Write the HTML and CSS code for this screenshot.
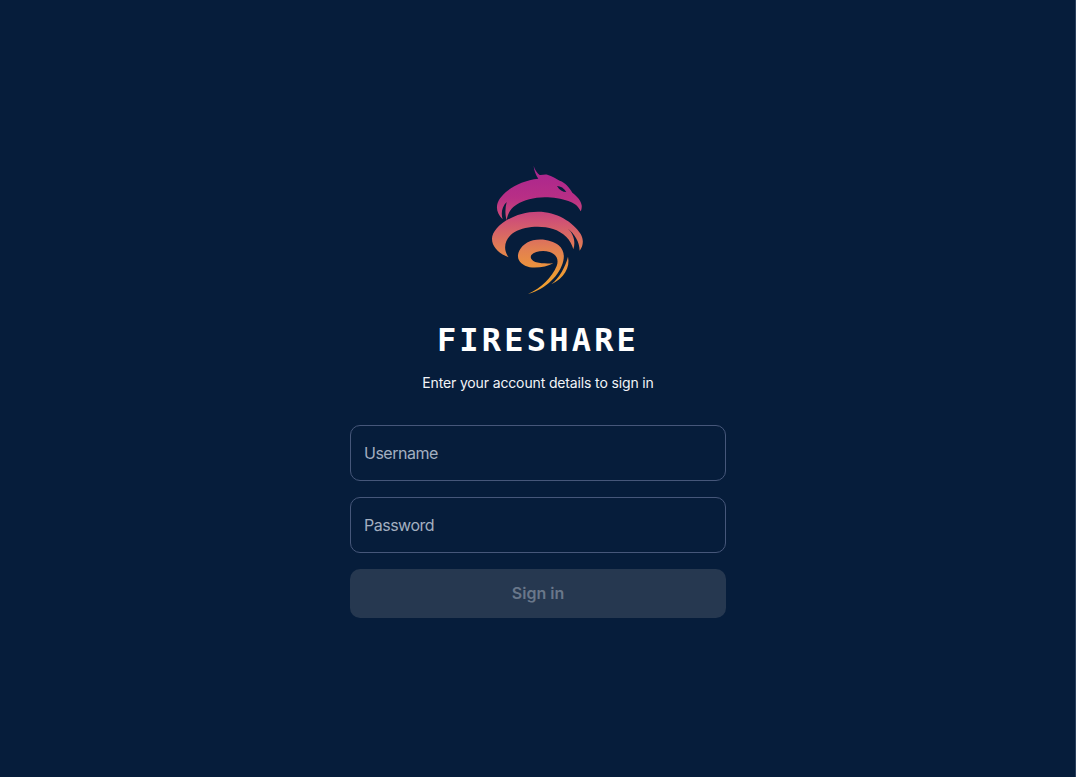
FILE: index.html
```html
<!DOCTYPE html>
<html lang="en">
<head>
<meta charset="utf-8">
<title>Fireshare</title>
<link rel="stylesheet" href="styles.css">
</head>
<body>
<main class="page">
  <svg class="logo" viewBox="0 0 360 420" width="120" height="140" aria-label="Fireshare logo">
    <defs>
      <linearGradient id="fire" gradientUnits="userSpaceOnUse" x1="0" y1="20" x2="0" y2="400">
        <stop offset="0" stop-color="#a92590"/>
        <stop offset="0.25" stop-color="#b82f85"/>
        <stop offset="0.42" stop-color="#cf5076"/>
        <stop offset="0.65" stop-color="#e27f52"/>
        <stop offset="0.85" stop-color="#ee9a35"/>
        <stop offset="1" stop-color="#f2a02c"/>
      </linearGradient>
    </defs>
    <path fill="url(#fire)" fill-rule="evenodd" d="M167 18C170 30 178 40 185 45C192 46 200 42 208 44C222 47 235 57 245 62C262 68 274 82 283 98C296 108 310 122 311 136C312 142 310 150 308 154C300 136 286 128 271 123C245 113 205 109 176 113C145 117 118 130 106 141C94 152 88 166 86 181C81 165 81 145 86 126C72 140 68 160 74 178C60 165 54 148 58 132C66 100 120 62 181 56C174 46 168 32 167 18ZM237 78C244 90 254 96 265 96C258 84 248 78 237 78Z"/>
    <path fill="url(#fire)" d="M92 292C62 280 42 260 42 236C42 205 100 155 180 155C235 155 285 185 308 222C318 240 316 258 305 272C304 245 290 222 268 205C286 220 294 245 286 268C280 240 255 216 225 207C190 195 140 199 110 216C85 231 70 262 92 292Z"/>
    <path fill="url(#fire)" d="M150 402C190 384 222 352 236 318C243 298 236 284 215 276C195 270 170 274 160 285C154 296 165 304 175 307C190 311 208 311 226 310C208 320 180 325 155 322C135 317 118 305 120 285C122 268 140 246 165 241C195 234 225 243 242 256C256 268 260 285 256 302C246 345 205 386 150 402Z"/>
    <path fill="url(#fire)" d="M220 373C244 352 262 322 270 290C277 322 258 354 220 373Z"/>
  </svg>
  <h1 class="brand">FIRESHARE</h1>
  <p class="lead">Enter your account details to sign in</p>
  <form class="form">
    <input class="field" type="text" placeholder="Username">
    <input class="field" type="password" placeholder="Password">
    <button class="submit" type="button" disabled>Sign in</button>
  </form>
</main>
</body>
</html>
```
FILE: styles.css
```css
* { box-sizing: border-box; }
html, body { height: 100%; margin: 0; }
body { background: #061d3b; box-shadow: inset -1px 0 0 #2a3f5c; font-family: Inter, "Liberation Sans", sans-serif; overflow: hidden; }
.page { display: flex; flex-direction: column; align-items: center; padding-top: 160px; height: 777px; }
.logo { display: block; }
.brand { margin: 16px 0 0; font: 700 32px/48px "DejaVu Sans Mono", monospace; letter-spacing: 3.2px; color: #fff; }
.lead { margin: 9px 0 0; font-size: 14px; line-height: 20px; letter-spacing: -0.14px; color: #f2f4f7; }
.form { width: 376px; margin-top: 32px; display: flex; flex-direction: column; gap: 16px; }
.field { display: block; width: 100%; height: 56px; padding: 0 13px; background: transparent; border: 1px solid #46577a; border-radius: 10px; font: 400 16px Inter, sans-serif; letter-spacing: -0.5px; color: #fff; outline: none; }
.field::placeholder { color: #a3afc0; opacity: 1; }
.submit { display: block; width: 100%; height: 49px; padding: 0 0 2px; border: 0; border-radius: 10px; background: #263850; color: #69778a; font: 600 16px Inter, sans-serif; }
```
